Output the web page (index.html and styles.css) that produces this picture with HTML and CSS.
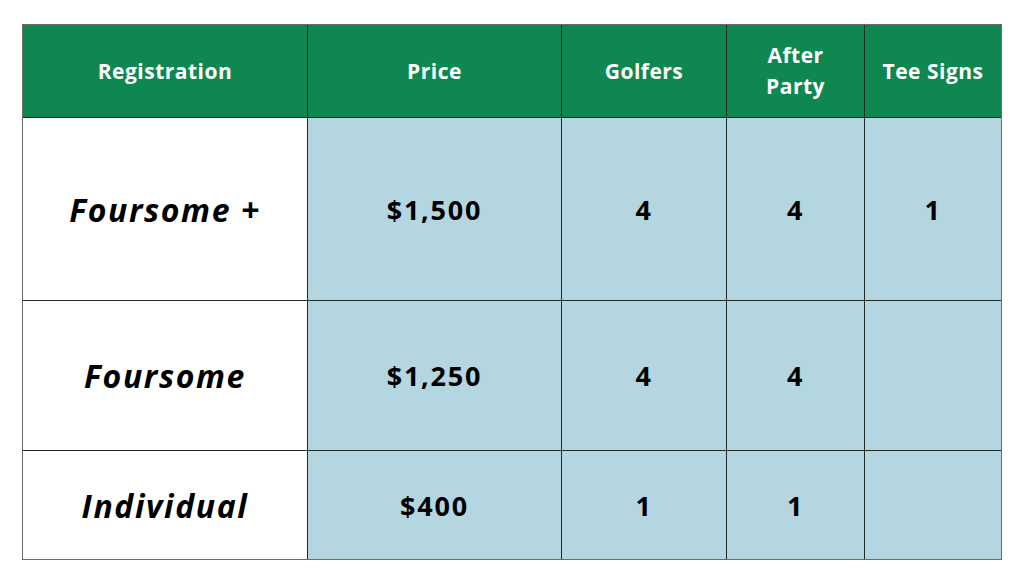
FILE: index.html
```html
<!DOCTYPE html>
<html>
<head>
<meta charset="utf-8">
<link rel="stylesheet" href="styles.css">
</head>
<body>
<div class="table">
  <div class="cell head">Registration</div>
  <div class="cell head">Price</div>
  <div class="cell head">Golfers</div>
  <div class="cell head">After<br>Party</div>
  <div class="cell head">Tee Signs</div>

  <div class="cell name">Foursome +</div>
  <div class="cell val">$1,500</div>
  <div class="cell val">4</div>
  <div class="cell val">4</div>
  <div class="cell val">1</div>

  <div class="cell name">Foursome</div>
  <div class="cell val">$1,250</div>
  <div class="cell val">4</div>
  <div class="cell val">4</div>
  <div class="cell val"></div>

  <div class="cell name">Individual</div>
  <div class="cell val">$400</div>
  <div class="cell val">1</div>
  <div class="cell val">1</div>
  <div class="cell val"></div>
</div>
</body>
</html>
```
FILE: styles.css
```css
html, body {
  margin: 0;
  padding: 0;
  background: #ffffff;
}
body {
  padding: 24px 0 0 22px;
  font-family: "Open Sans", "Noto Sans", sans-serif;
}
.table {
  display: grid;
  grid-template-columns: 284px 253px 164px 137px 136px;
  grid-template-rows: 92px 182px 149px 108px;
  gap: 1px;
  background: #1e2a28;
  border: 1px solid #6b6b6b;
  width: 978px;
}
.cell {
  display: flex;
  align-items: center;
  justify-content: center;
  text-align: center;
}
.head {
  background: #0e8750;
  color: #ffffff;
  font-weight: 700;
  font-size: 21px;
  letter-spacing: 0.5px;
  line-height: 31px;
}
.name {
  background: #ffffff;
  color: #000000;
  font-style: italic;
  font-weight: 700;
  font-size: 32px;
  letter-spacing: 1.6px;
}
.val {
  background: #b4d6e1;
  color: #000000;
  font-weight: 700;
  font-size: 27px;
  letter-spacing: 1.8px;
}
```
